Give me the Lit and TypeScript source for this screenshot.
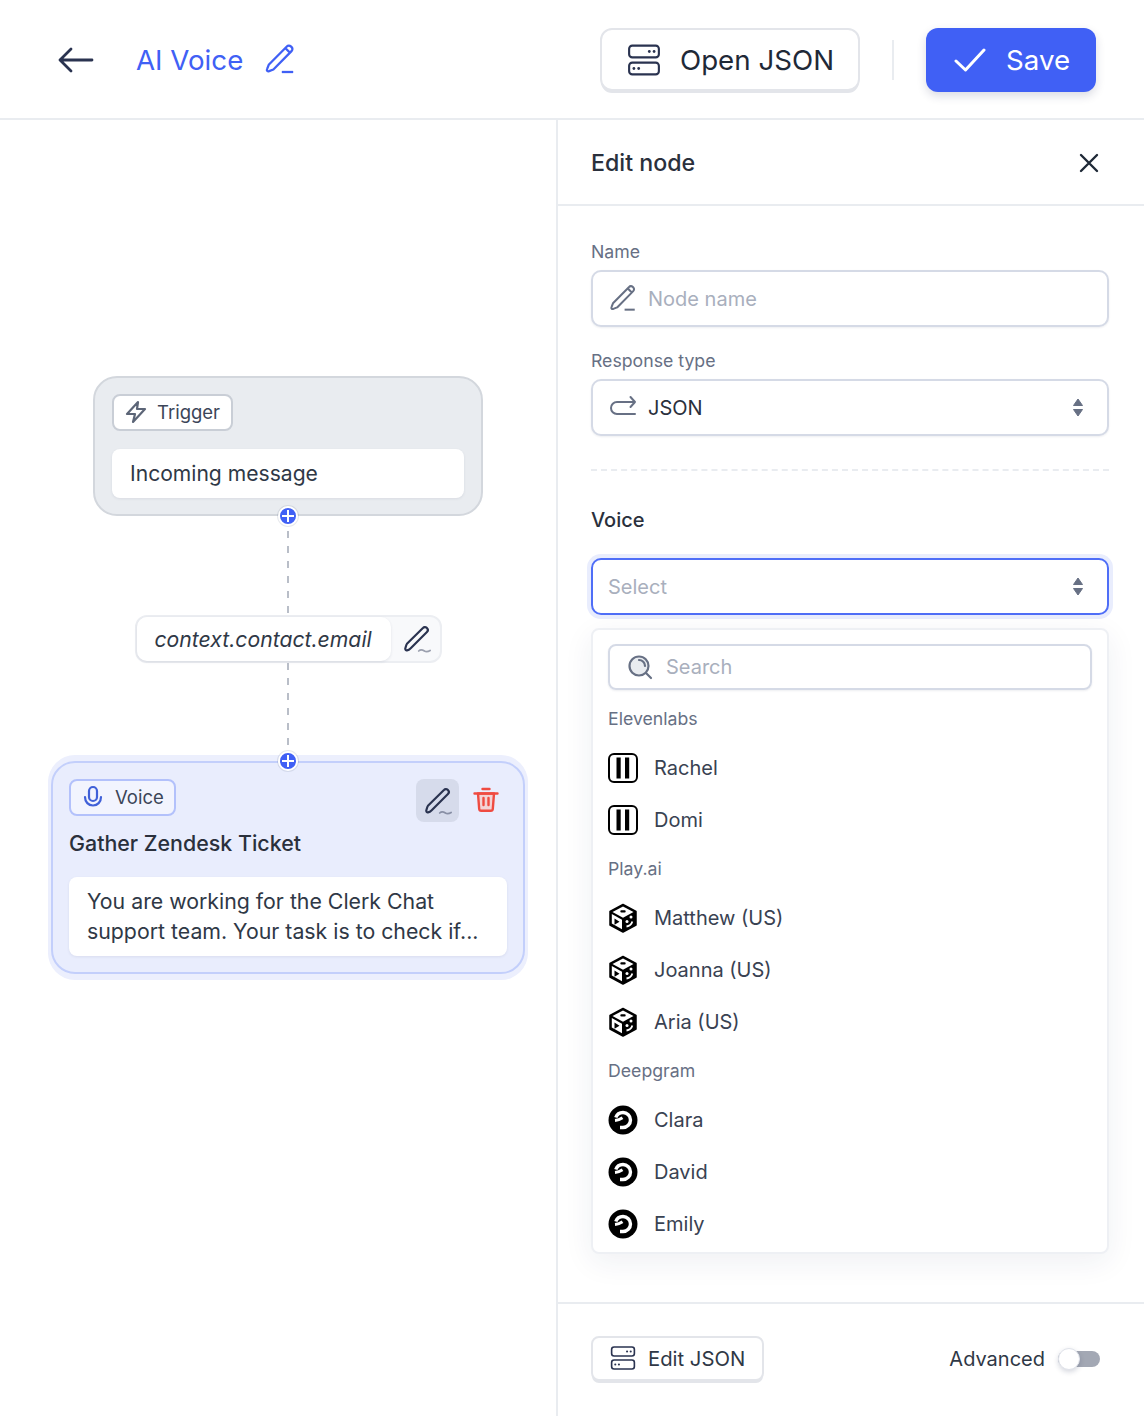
import { LitElement, html, css, svg } from 'lit';
import { customElement } from 'lit/decorators.js';

const pencil = svg`<path d="M4.200 22.600c-.5 1.200.5 2.100 1.700 1.700l3.600-1.400L24.600 7.600c1-1 1-2.400.1-3.300l-.7-.7c-.9-.9-2.400-.9-3.300.1L5.600 19l-1.400 3.600zM20 5.600l3 3" fill="none" stroke="currentColor" stroke-width="1.900" stroke-linejoin="round"/><path d="M16.500 25H26" stroke="currentColor" stroke-width="1.900" fill="none"/>`;
const pencilWave = svg`<path d="M4 21.500c-.6 1.300-.2 2.800 1.300 2.400 1-.2 2.200-.9 3.200-1.900L22.700 7.800c1-1 1-2.400.1-3.300l-.3-.3c-.9-.9-2.400-.9-3.300.1L5.200 18.100c-.5.500-.9 2.200-1.200 3.400z" fill="none" stroke="currentColor" stroke-width="1.900" stroke-linejoin="round"/><path d="M15.500 24.500c2-2 3.500-1 5 0s3 .8 5-.5" stroke="currentColor" stroke-opacity=".45" stroke-width="1.500" fill="none" stroke-linecap="round"/>`;
const server = svg`<g fill="none" stroke="#2a3350" stroke-width="2"><rect x="2" y="2.500" width="28" height="11" rx="3"/><rect x="2" y="18.500" width="28" height="11" rx="3"/></g><g fill="#2a3350"><circle cx="21" cy="8" r="1.300"/><circle cx="25.500" cy="8" r="1.300"/><circle cx="6.500" cy="24" r="1.300"/><circle cx="11" cy="24" r="1.300"/></g>`;
const cube = svg`<path d="M15 1.500 28 8.500V22L15 29 2 22V8.500z" fill="#000" stroke="#000" stroke-width="1.500" stroke-linejoin="round"/><path d="M15 3.600 25.500 9 15 14.800 4.500 9z" fill="#fff"/><path d="M3.800 11 14 16.800v9.400L3.800 20.600z" fill="#fff"/><path d="M6.500 15.500l5 3.200-5 3z" fill="#000"/><rect x="12.300" y="7.300" width="5.400" height="2.200" rx="1.100" fill="#000"/><circle cx="23" cy="14" r="1.500" fill="#fff"/><circle cx="19" cy="18.500" r="1.500" fill="#fff"/><path d="M18.500 23.500c2.500-.4 5-2 5.800-5" stroke="#fff" stroke-width="1.800" fill="none"/>`;
const swirl = svg`<circle cx="15" cy="15" r="14.500" fill="#000"/><path d="M7.800 12.500C9 9 11.500 7.500 15 7.500a7.500 7.500 0 0 1 0 15h-3" stroke="#fff" stroke-width="3.400" fill="none"/><path d="M7 15.500c2.500-.2 5-1 7.500-2.700" stroke="#fff" stroke-width="3" fill="none"/>`;
const pause = svg`<rect x="1" y="1" width="28" height="28" rx="5" fill="#fff" stroke="#000" stroke-width="2"/><rect x="8.500" y="4.500" width="4.200" height="21" fill="#000"/><rect x="17" y="4.500" width="4.200" height="21" fill="#000"/>`;
const updown = svg`<path d="M6 1 10.500 7.500H1.500zM1.500 11.500h9L6 18z" fill="#677084" stroke="#677084" stroke-linejoin="round"/>`;

const groups = [
  { name: 'Elevenlabs', icon: pause, voices: ['Rachel', 'Domi'] },
  { name: 'Play.ai', icon: cube, voices: ['Matthew (US)', 'Joanna (US)', 'Aria (US)'] },
  { name: 'Deepgram', icon: swirl, voices: ['Clara', 'David', 'Emily'] },
];

@customElement('app-root')
export class AppRoot extends LitElement {
  static styles = css`
    :host {
      display: block;
      width: 1144px;
      height: 1416px;
      overflow: hidden;
      background: #fff;
      color: #1f2937;
      font-family: Inter, 'Liberation Sans', sans-serif;
    }
    svg { display: block; flex: none; }

    .topbar {
      height: 120px;
      box-sizing: border-box;
      border-bottom: 2px solid #e9ecf0;
      display: flex;
      align-items: center;
      padding: 2px 48px 0 58px;
    }
    .back { color: #2a3350; margin-right: 42px; }
    .title { font-size: 27.7px; color: #4060f5; margin-right: 19px; }
    .title-edit { color: #4060f5; }
    .spacer { flex: 1; }
    .btn {
      display: flex;
      align-items: center;
      box-sizing: border-box;
      background: #fff;
      border: 2px solid #e3e5ea;
      border-radius: 12px;
      box-shadow: 0 3px 0 -1px #e3e5ea;
    }
    .btn-open { width: 260px; height: 63px; margin-top: -1px; padding-left: 25px; gap: 19px; font-size: 27.7px; color: #1f2937; }
    .divider { width: 2px; height: 40px; background: #e9ecf0; margin: 0 32px; }
    .btn-save {
      width: 170px;
      height: 64px;
      display: flex;
      align-items: center;
      padding-left: 28px;
      gap: 20px;
      box-sizing: border-box;
      background: #4060f5;
      border-radius: 12px;
      color: #fff;
      font-size: 27.7px;
      box-shadow: 0 4px 10px rgba(30, 40, 80, .16);
    }

    .main { display: flex; height: 1296px; }
    .canvas {
      width: 556px;
      flex: none;
      box-sizing: border-box;
      padding: 256px 0 0 20px;
      display: flex;
      flex-direction: column;
      align-items: center;
    }
    .panel {
      flex: 1;
      border-left: 2px solid #e9ecf0;
      display: flex;
      flex-direction: column;
      min-width: 0;
    }

    .node-trigger {
      position: relative;
      box-sizing: border-box;
      width: 390px;
      height: 140px;
      background: #e9ecf0;
      border: 2px solid #d3d7dd;
      border-radius: 24px;
      padding: 16px 17px;
    }
    .tag {
      display: inline-flex;
      align-items: center;
      box-sizing: border-box;
      height: 37px;
      background: #fff;
      border: 2px solid #c9ced6;
      border-radius: 8px;
      font-size: 18.5px;
      color: #3b4558;
    }
    .tag-trigger { padding: 0 11px 2px 10px; gap: 9px; }
    .tag-trigger svg { color: #5c6577; }
    .msg {
      margin-top: 18px;
      height: 49px;
      box-sizing: border-box;
      background: #fff;
      border-radius: 8px;
      box-shadow: 0 1px 3px rgba(30, 40, 80, .08);
      display: flex;
      align-items: center;
      padding: 0 18px;
      font-size: 21.1px;
      color: #2f3846;
    }
    .plus {
      position: absolute;
      left: 50%;
      margin-left: -10px;
      width: 16px;
      height: 16px;
      border: 2px solid #fff;
      border-radius: 50%;
      background: #4060f5;
      box-shadow: 0 0 0 1px rgba(60, 70, 110, .12);
      z-index: 1;
    }
    .plus::before, .plus::after { content: ''; position: absolute; background: #fff; }
    .plus::before { left: 2px; right: 2px; top: 7px; height: 2px; }
    .plus::after { top: 2px; bottom: 2px; left: 7px; width: 2px; }
    .node-trigger .plus { bottom: -12px; }
    .node-voice .plus { top: -12px; }

    .line {
      width: 2px;
      background: repeating-linear-gradient(#b9bec8 0 7px, transparent 7px 15px);
    }
    .line-a { height: 99px; }
    .line-b { height: 98px; }

    .cond {
      width: 307px;
      height: 48px;
      box-sizing: border-box;
      background: #f8f9fb;
      border: 2px solid #eceef2;
      border-radius: 12px;
      display: flex;
      align-items: center;
    }
    .cond-text {
      width: 254px;
      height: 44px;
      flex: none;
      box-sizing: border-box;
      background: #fff;
      border-radius: 10px;
      box-shadow: 0 1px 3px rgba(30, 40, 80, .1);
      display: flex;
      align-items: center;
      padding-left: 18px;
      font-size: 21.2px;
      font-style: italic;
      color: #2f3846;
      white-space: nowrap;
    }
    .cond svg { margin-left: 10px; color: #2a3350; }

    .node-voice {
      position: relative;
      box-sizing: border-box;
      width: 474px;
      height: 213px;
      background: #e9edfd;
      border: 2px solid #c3cffb;
      border-radius: 24px;
      box-shadow: 0 0 0 3px #eceffd, 0 -3px 0 3px #eceffd, 0 3px 0 3px #eceffd;
      padding: 16px;
    }
    .voice-top { display: flex; align-items: flex-start; }
    .tag-voice { border-color: #b3c1fb; padding: 0 10px 2px 10px; gap: 10px; background: #f2f4fe; }
    .tag-voice svg { color: #4060d8; }
    .edit-box {
      width: 43px;
      height: 43px;
      margin-left: auto;
      display: flex;
      align-items: center;
      justify-content: center;
      border-radius: 8px;
      background: #d6dbeb;
      color: #2a3350;
    }
    .trash { margin: 8px 8px 0 14px; }
    .voice-name { margin-top: 8px; font-size: 21.4px; line-height: 27px; font-weight: 500; color: #2a303c; }
    .voice-text {
      margin-top: 20px;
      height: 79px;
      box-sizing: border-box;
      background: #fff;
      border-radius: 8px;
      box-shadow: 0 1px 3px rgba(30, 40, 80, .08);
      padding: 9px 18px 0;
      font-size: 21.3px;
      line-height: 30px;
      color: #2f3846;
      white-space: nowrap;
    }

    .panel-head {
      height: 86px;
      box-sizing: border-box;
      border-bottom: 2px solid #e9ecf0;
      display: flex;
      align-items: center;
      justify-content: space-between;
      padding: 2px 45px 0 33px;
      font-size: 23.2px;
      font-weight: 500;
      color: #2a303c;
      flex: none;
    }
    .panel-body { flex: 1; padding: 0 35px 0 33px; }
    .label { font-size: 17.7px; line-height: 24px; color: #677084; margin-bottom: 6px; }
    .label-name { margin-top: 34px; }
    .label-type { margin-top: 22px; }
    .field {
      height: 57px;
      box-sizing: border-box;
      border: 2px solid #d5dae6;
      border-radius: 10px;
      box-shadow: 0 1px 2px rgba(30, 40, 80, .08);
      display: flex;
      align-items: center;
      padding: 0 23px 0 14px;
      gap: 9px;
      font-size: 20px;
      background: #fff;
    }
    .field svg { color: #677084; }
    .ph { color: #a9afbd; flex: 1; }
    .val { color: #2a303c; flex: 1; }
    .dashes { margin-top: 33px; border-top: 2px dashed #e9ecf0; }
    .voice-head { margin-top: 35px; font-size: 20px; line-height: 28px; font-weight: 500; color: #2a303c; }
    .select-open {
      margin-top: 24px;
      border-color: #4f6ef7;
      box-shadow: 0 0 0 4px #e9edfd;
      padding-left: 15px;
    }
    .dropdown {
      margin-top: 13px;
      height: 626px;
      box-sizing: border-box;
      border: 2px solid #eef0f4;
      border-radius: 8px;
      box-shadow: 0 8px 30px rgba(30, 40, 80, .07);
      background: #fff;
      padding: 14px 15px 0;
    }
    .search {
      height: 46px;
      box-sizing: border-box;
      border: 2px solid #d5dae6;
      border-radius: 8px;
      box-shadow: 0 1px 2px rgba(30, 40, 80, .08);
      display: flex;
      align-items: center;
      gap: 13px;
      padding-left: 17px;
      font-size: 20px;
      color: #a9afbd;
    }
    .group {
      height: 46px;
      box-sizing: border-box;
      display: flex;
      align-items: center;
      padding-bottom: 2px;
      font-size: 17.7px;
      color: #677084;
    }
    .search + .group { height: 52px; padding: 4px 0 0; }
    .voice-row {
      height: 52px;
      display: flex;
      align-items: center;
      gap: 16px;
      font-size: 20px;
      color: #394252;
    }

    .panel-foot {
      height: 114px;
      box-sizing: border-box;
      flex: none;
      border-top: 2px solid #e9ecf0;
      display: flex;
      align-items: center;
      padding: 0 44px 2px 33px;
    }
    .btn-edit { width: 173px; height: 45px; margin-top: -2px; padding-left: 17px; gap: 12px; font-size: 20.3px; color: #2f3846; border-radius: 8px; }
    .adv { margin-left: auto; font-size: 20px; color: #2f3846; }
    .toggle { position: relative; margin-left: 13px; width: 42px; height: 16px; border-radius: 8px; background: #a3a8b4; }
    .knob {
      position: absolute;
      left: 0;
      top: -3px;
      width: 22px;
      height: 22px;
      box-sizing: border-box;
      background: #fff;
      border: 1px solid #e0e3ea;
      border-radius: 50%;
      box-shadow: 0 2px 5px rgba(30, 40, 80, .18);
    }
  `;

  renderTop() {
    return html`
      <div class="topbar">
        <svg class="back" width="36" height="26" viewBox="0 0 36 26" fill="none" stroke="currentColor" stroke-width="2.800" stroke-linecap="round" stroke-linejoin="round">
          <path d="M2 13h32M13 2 2 13l11 11"/>
        </svg>
        <span class="title">AI Voice</span>
        <svg class="title-edit" width="36" height="36" viewBox="0 0 30 30">${pencil}</svg>
        <div class="spacer"></div>
        <div class="btn btn-open">
          <svg width="34" height="34" viewBox="0 0 32 32">${server}</svg>
          <span>Open JSON</span>
        </div>
        <div class="divider"></div>
        <div class="btn-save">
          <svg width="32" height="26" viewBox="0 0 32 26" fill="none" stroke="#fff" stroke-width="3" stroke-linecap="round" stroke-linejoin="round"><path d="M2 14l9.500 9L30 3"/></svg>
          <span>Save</span>
        </div>
      </div>
    `;
  }

  renderCanvas() {
    return html`
      <div class="canvas">
        <div class="node-trigger">
          <div class="tag tag-trigger">
            <svg width="24" height="24" viewBox="0 0 24 24" fill="none" stroke="currentColor" stroke-width="2.200" stroke-linejoin="round"><path d="M14 2 3 14h8l-2 8 12-13h-8z"/></svg>
            <span>Trigger</span>
          </div>
          <div class="msg">Incoming message</div>
          <div class="plus"></div>
        </div>
        <div class="line line-a"></div>
        <div class="cond">
          <div class="cond-text">context.contact.email</div>
          <svg width="32" height="32" viewBox="0 0 28 28">${pencilWave}</svg>
        </div>
        <div class="line line-b"></div>
        <div class="node-voice">
          <div class="plus"></div>
          <div class="voice-top">
            <div class="tag tag-voice">
              <svg width="24" height="24" viewBox="0 0 24 24" fill="none" stroke="currentColor" stroke-width="2.200" stroke-linecap="round"><rect x="8" y="2" width="8" height="14" rx="4"/><path d="M4 12c0 5 3.500 8.500 8 8.500s8-3.500 8-8.500"/></svg>
              <span>Voice</span>
            </div>
            <div class="edit-box"><svg width="32" height="32" viewBox="0 0 28 28">${pencilWave}</svg></div>
            <svg class="trash" width="26" height="26" viewBox="0 0 26 26" fill="none" stroke="#ef4b41" stroke-width="2.400" stroke-linecap="round" stroke-linejoin="round">
              <path d="M5 6.500h16l-1.200 15.500a2 2 0 0 1-2 1.800H8.200a2 2 0 0 1-2-1.800z" fill="#f3d3d5"/>
              <path d="M1.500 6.500h23M9.500 2h7M10.500 11v7M15.500 11v7"/>
            </svg>
          </div>
          <div class="voice-name">Gather Zendesk Ticket</div>
          <div class="voice-text">You are working for the Clerk Chat<br />support team. Your task is to check if...</div>
        </div>
      </div>
    `;
  }

  renderPanel() {
    return html`
      <div class="panel">
        <div class="panel-head">
          <span>Edit node</span>
          <svg width="20" height="20" viewBox="0 0 20 20" fill="none" stroke="#1f2937" stroke-width="2.400" stroke-linecap="round"><path d="M2 2l16 16M18 2 2 18"/></svg>
        </div>
        <div class="panel-body">
          <div class="label label-name">Name</div>
          <div class="field">
            <svg width="32" height="32" viewBox="0 0 30 30">${pencil}</svg>
            <span class="ph">Node name</span>
          </div>
          <div class="label label-type">Response type</div>
          <div class="field">
            <svg width="32" height="32" viewBox="0 0 32 32" fill="none" stroke="currentColor" stroke-width="2" stroke-linecap="round" stroke-linejoin="round"><path d="M28 10H10a6 6 0 0 0 0 12h18M23.500 5l4.500 5-4.500 5"/></svg>
            <span class="val">JSON</span>
            <svg width="12" height="19" viewBox="0 0 12 19">${updown}</svg>
          </div>
          <div class="dashes"></div>
          <div class="voice-head">Voice</div>
          <div class="field select-open">
            <span class="ph">Select</span>
            <svg width="12" height="19" viewBox="0 0 12 19">${updown}</svg>
          </div>
          <div class="dropdown">
            <div class="search">
              <svg width="26" height="26" viewBox="0 0 26 26" fill="none" stroke="#677084" stroke-width="2.200" stroke-linecap="round"><circle cx="12" cy="12" r="9.500" fill="#e9ecf0"/><path d="M12 6a6 6 0 0 1 6 6M19 19l5 5"/></svg>
              <span>Search</span>
            </div>
            ${groups.map(
              (g) => html`
                <div class="group">${g.name}</div>
                ${g.voices.map(
                  (v) => html`
                    <div class="voice-row">
                      <svg width="30" height="30" viewBox="0 0 30 30">${g.icon}</svg>
                      <span>${v}</span>
                    </div>
                  `
                )}
              `
            )}
          </div>
        </div>
        <div class="panel-foot">
          <div class="btn btn-edit">
            <svg width="26" height="26" viewBox="0 0 32 32">${server}</svg>
            <span>Edit JSON</span>
          </div>
          <span class="adv">Advanced</span>
          <div class="toggle"><div class="knob"></div></div>
        </div>
      </div>
    `;
  }

  render() {
    return html`
      ${this.renderTop()}
      <div class="main">${this.renderCanvas()} ${this.renderPanel()}</div>
    `;
  }
}
